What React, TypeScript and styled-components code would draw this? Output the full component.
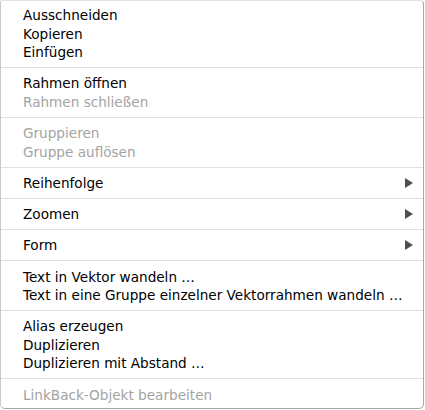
import styled, { createGlobalStyle } from "styled-components";

const GlobalStyle = createGlobalStyle`
    html, body {
        margin: 0;
        padding: 0;
        background: #ffffff;
    }
`;

type Item = { label: string; disabled?: boolean; submenu?: boolean };

const groups: Item[][] = [
    [{ label: "Ausschneiden" }, { label: "Kopieren" }, { label: "Einfügen" }],
    [{ label: "Rahmen öffnen" }, { label: "Rahmen schließen", disabled: true }],
    [
        { label: "Gruppieren", disabled: true },
        { label: "Gruppe auflösen", disabled: true },
    ],
    [{ label: "Reihenfolge", submenu: true }],
    [{ label: "Zoomen", submenu: true }],
    [{ label: "Form", submenu: true }],
    [
        { label: "Text in Vektor wandeln …" },
        { label: "Text in eine Gruppe einzelner Vektorrahmen wandeln …" },
    ],
    [
        { label: "Alias erzeugen" },
        { label: "Duplizieren" },
        { label: "Duplizieren mit Abstand …" },
    ],
    [{ label: "LinkBack-Objekt bearbeiten", disabled: true }],
];

const Menu = styled.div`
    box-sizing: border-box;
    width: 424px;
    height: 409px;
    background: #ffffff;
    border: 1px solid #c9c9c9;
    border-top-color: #e2e2e2;
    border-right-color: #a9a9a9;
    border-bottom-color: #a9a9a9;
    border-radius: 2px 4px 5px 5px;
    display: flex;
    flex-direction: column;
    font-family: "DejaVu Sans", "Liberation Sans", sans-serif;
    font-size: 13.6px;
`;

const Group = styled.div`
    display: flex;
    flex-direction: column;
    padding: 6px 0 5.75px;

    &:first-child {
        padding-top: 4.75px;
    }

    & + & {
        border-top: 1px solid #e1e1e1;
    }
`;

const Row = styled.div<{ $disabled?: boolean }>`
    height: 18.5px;
    display: flex;
    align-items: center;
    justify-content: space-between;
    padding: 0 10px 0 22px;
    color: ${(p) => (p.$disabled ? "#a3a3a3" : "#000000")};
    white-space: nowrap;
`;

const Arrow = styled.span`
    width: 0;
    height: 0;
    border-top: 5px solid transparent;
    border-bottom: 5px solid transparent;
    border-left: 8px solid #4f4f4f;
`;

export default function App() {
    return (
        <>
            <GlobalStyle />
            <Menu>
                {groups.map((group, gi) => (
                    <Group key={gi}>
                        {group.map((item) => (
                            <Row key={item.label} $disabled={item.disabled}>
                                <span>{item.label}</span>
                                {item.submenu && <Arrow />}
                            </Row>
                        ))}
                    </Group>
                ))}
            </Menu>
        </>
    );
}
